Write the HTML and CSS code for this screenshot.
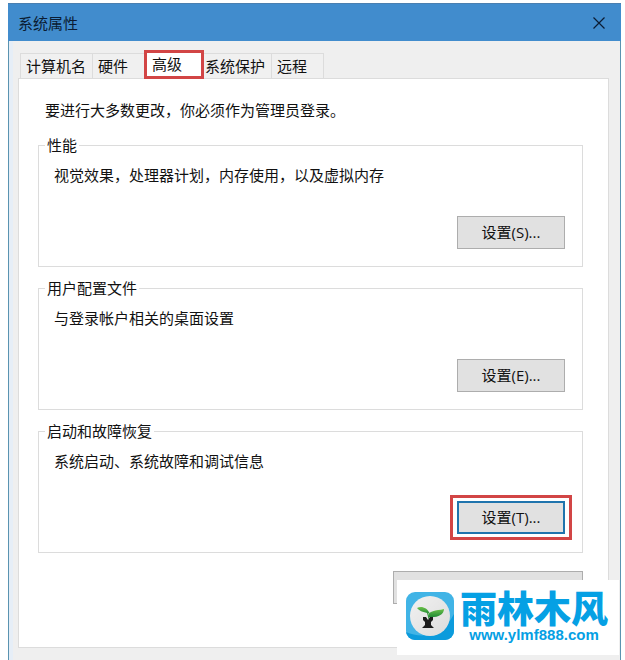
FILE: index.html
```html
<!DOCTYPE html>
<html lang="zh-CN">
  <head>
    <meta charset="UTF-8" />
    <meta name="viewport" content="width=device-width, initial-scale=1.0" />
    <title>系统属性</title>
    <link rel="stylesheet" href="styles.css">
  </head>
  <body>
    <div class="window">
      <header class="titlebar">
        <h1>系统属性</h1>
        <button class="close" type="button" aria-label="关闭">
          <svg width="12" height="12" viewBox="0 0 12 12">
            <path d="M0.5 0.5 L11.5 11.5 M11.5 0.5 L0.5 11.5" stroke="#0b1c33" stroke-width="1.2" fill="none" />
          </svg>
        </button>
      </header>

      <main class="content">
        <div class="tabs" role="tablist">
          <button class="tab" type="button" role="tab">计算机名</button>
          <button class="tab" type="button" role="tab">硬件</button>
          <button class="tab active" type="button" role="tab" aria-selected="true">高级</button>
          <button class="tab" type="button" role="tab">系统保护</button>
          <button class="tab" type="button" role="tab">远程</button>
        </div>

        <div class="panel" role="tabpanel">
          <p class="notice">要进行大多数更改，你必须作为管理员登录。</p>

          <fieldset class="group">
            <legend>性能</legend>
            <p>视觉效果，处理器计划，内存使用，以及虚拟内存</p>
            <button class="btn" type="button">设置(S)...</button>
          </fieldset>

          <fieldset class="group">
            <legend>用户配置文件</legend>
            <p>与登录帐户相关的桌面设置</p>
            <button class="btn" type="button">设置(E)...</button>
          </fieldset>

          <fieldset class="group">
            <legend>启动和故障恢复</legend>
            <p>系统启动、系统故障和调试信息</p>
            <div class="highlight">
              <button class="btn focused" type="button">设置(T)...</button>
            </div>
          </fieldset>

          <button class="btn env" type="button" aria-label="环境变量"></button>
        </div>
      </main>

      <div class="watermark">
        <svg class="logo" width="48" height="48" viewBox="0 0 48 48">
          <defs>
            <linearGradient id="leaf" x1="0" y1="0" x2="0" y2="1">
              <stop offset="0" stop-color="#6cc04a" />
              <stop offset="1" stop-color="#1f8a35" />
            </linearGradient>
            <linearGradient id="disc" x1="0" y1="0" x2="1" y2="1">
              <stop offset="0" stop-color="#f1f1f1" />
              <stop offset="1" stop-color="#dcdcdc" />
            </linearGradient>
            <clipPath id="tile"><rect width="48" height="48" rx="9" /></clipPath>
          </defs>
          <g clip-path="url(#tile)">
            <rect width="48" height="48" fill="#41b4e6" />
            <path d="M48 22 V48 H0 V40 C18 48 38 42 48 22 Z" fill="#0c9bdc" />
          </g>
          <circle cx="24" cy="24" r="20" fill="url(#disc)" />
          <path d="M11 16 C15 14 21 15 24 22 C19 20 14 20 11 16 Z" fill="url(#leaf)" />
          <path d="M22 25 C22 18 30 19 38 17 C38 23 31 26 22 25 Z" fill="url(#leaf)" />
          <path d="M21 19 L23 27" stroke="#35973a" stroke-width="1" fill="none" />
          <path d="M17 25 H20 L22 28 L24 25 H27 V28 L25 30 V33 L28 36 H16 L19 33 V30 L17 28 Z" fill="#1c1c1c" />
        </svg>
        <div class="brand">
          <strong>雨林木风</strong>
          <span>www.ylmf888.com</span>
        </div>
      </div>
    </div>
  </body>
</html>
```
FILE: styles.css
```css
* {
  box-sizing: border-box;
}

body {
  margin: 0;
  padding: 3px 4px 0 8px;
  background: #fff;
  color: #111;
  font-family: "Open Sans", "Noto Sans CJK SC", sans-serif;
  font-size: 15px;
  line-height: 20px;
}

button {
  font: inherit;
  color: inherit;
}

p {
  margin: 0;
}

.window {
  position: relative;
  display: flex;
  flex-direction: column;
  min-height: calc(100vh - 3px);
  border: 1px solid #5a93b0;
  border-top: 0;
  border-bottom: 0;
  background: #efefef;
}

.titlebar {
  display: flex;
  justify-content: space-between;
  align-items: center;
  height: 38px;
  margin: 0 -1px;
  padding: 0 10px;
  background: #418ccd;
  border-top: 1px solid #4a7fb0;
}

.titlebar h1 {
  margin: 0;
  font-size: 15px;
  font-weight: normal;
  color: #0b1c33;
}

.close {
  display: flex;
  padding: 6px;
  border: 0;
  background: none;
}

.content {
  flex: 1;
  padding: 9px 11px 11px 5px;
  border-left: 4px solid #e6eef7;
}

.tabs {
  display: flex;
  align-items: flex-end;
  padding-left: 2px;
}

.tab {
  height: 26px;
  min-width: 52px;
  margin-bottom: -1px;
  padding: 0 6px 0 5px;
  border: 1px solid #dcdcdc;
  border-right: 0;
  background: #f0f0f0;
  text-align: left;
}

.tab:last-child {
  min-width: 53px;
  border-right: 1px solid #dcdcdc;
}

.tab.active {
  position: relative;
  z-index: 1;
  height: 29px;
  min-width: 60px;
  margin-right: -5px;
  padding-bottom: 2px;
  border: 3px solid #d24545;
  background: #fff;
}

.panel {
  display: flex;
  flex-direction: column;
  padding: 21px 25px 43px 19px;
  border: 1px solid #dcdcdc;
  background: #fff;
}

.notice {
  margin-bottom: 15px;
  padding-left: 7px;
}

.group {
  display: flex;
  flex-direction: column;
  min-width: 0;
  margin: 0 0 11px;
  padding: 10px 17px 17px 15px;
  border: 1px solid #dcdcdc;
}

.group legend {
  margin-left: -9px;
  padding: 0 2px;
}

.btn {
  align-self: flex-end;
  width: 108px;
  height: 33px;
  margin-top: 31px;
  padding: 0 0 2px;
  border: 1px solid #adadad;
  background: #e1e1e1;
}

.highlight {
  display: flex;
  align-self: flex-end;
  margin: 24px -7px -5px 0;
  padding: 3px 4px;
  border: 3px solid #d24545;
}

.btn.focused {
  margin-top: 0;
  border: 2px solid #1f74ad;
}

.btn.env {
  width: 190px;
  margin-top: 7px;
}

/* site stamp over the lower right corner */
.watermark {
  position: absolute;
  right: 1px;
  bottom: 5px;
  display: flex;
  gap: 6px;
  width: 222px;
  height: 75px;
  padding: 12px 9px;
  background: #fff;
}

.logo {
  flex: none;
}

.brand {
  display: flex;
  flex-direction: column;
  align-items: center;
  color: #05a0e4;
  white-space: nowrap;
}

.brand strong {
  font-family: "Noto Sans CJK SC", sans-serif;
  font-size: 37px;
  font-weight: 900;
  line-height: 30px;
}

.brand span {
  font-family: "Liberation Sans", sans-serif;
  font-size: 15px;
  font-weight: bold;
  line-height: 26px;
}
```
